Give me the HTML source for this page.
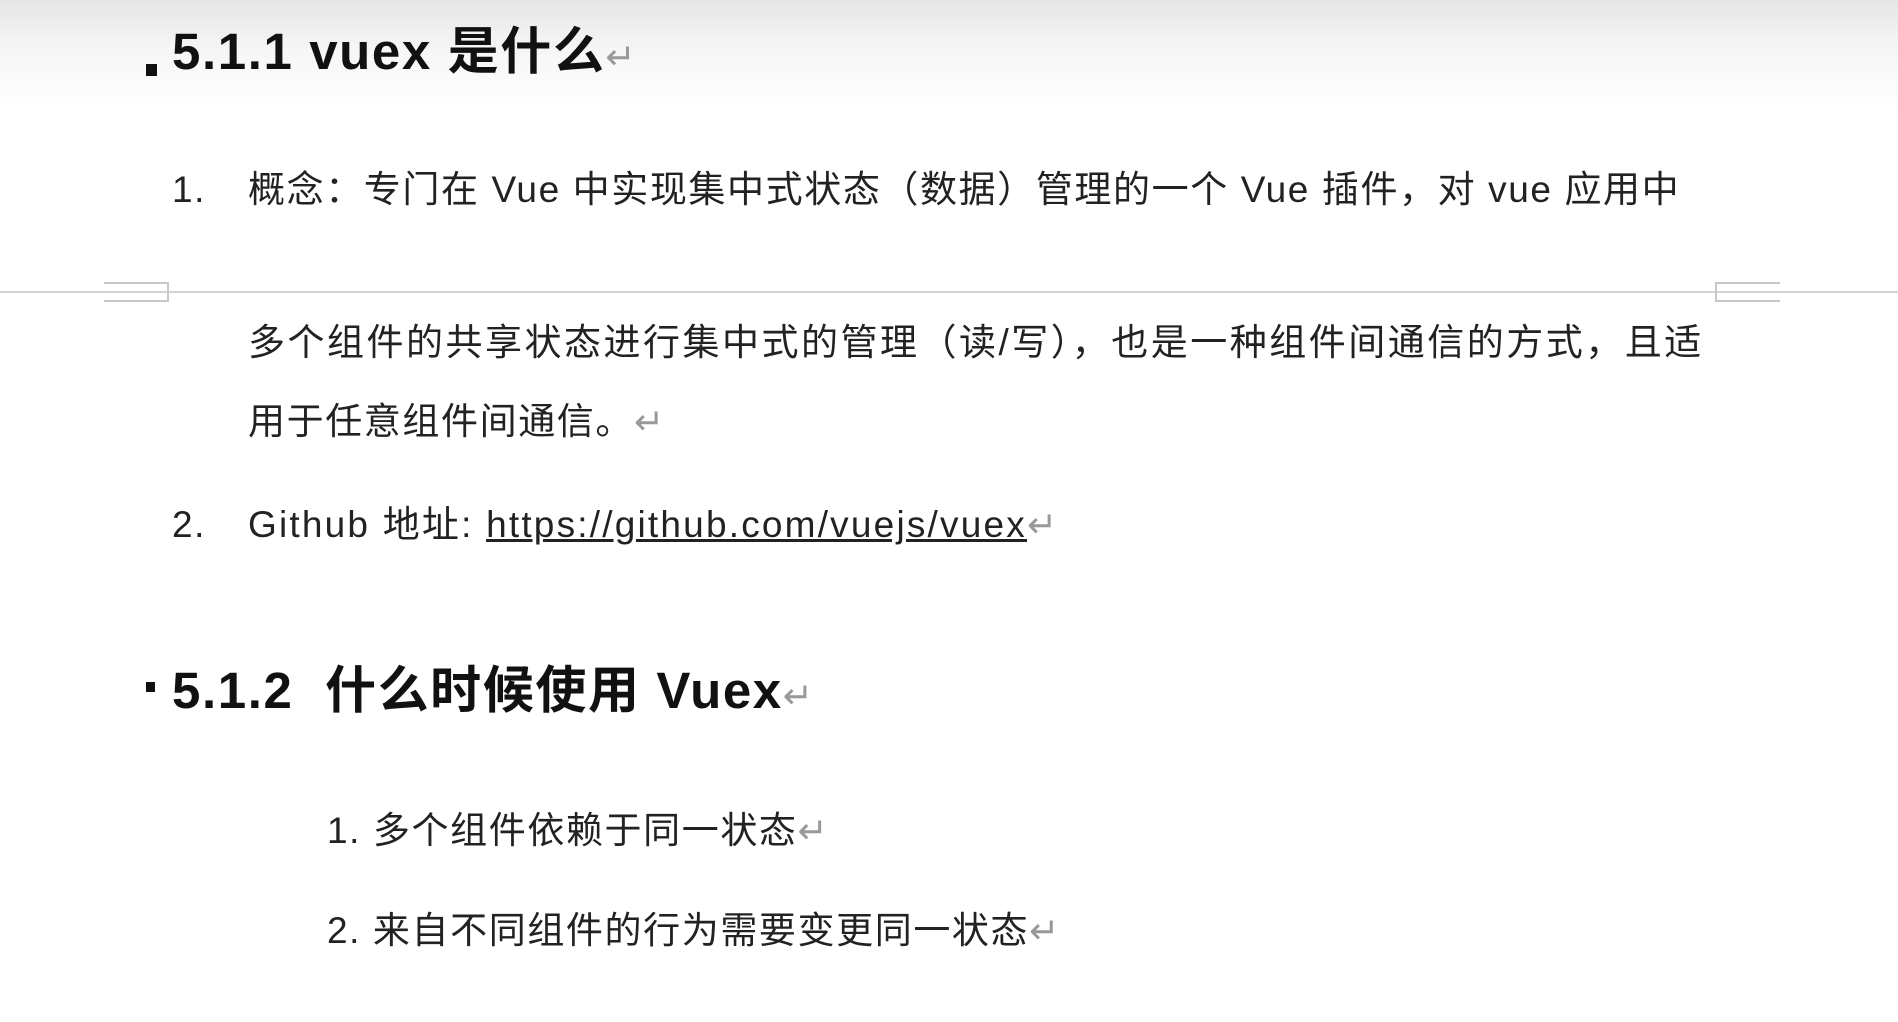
<!DOCTYPE html>
<html><head><meta charset="utf-8"><style>
html,body{margin:0;padding:0;width:1898px;height:1022px;overflow:hidden;background:#fff;}
body{background:linear-gradient(#e6e6e6 0px,#f6f6f6 50px,#fff 110px,#fff 100%);position:relative;
font-family:"Liberation Sans","Noto Sans CJK SC",sans-serif;color:#1a1a1a;}
.t{position:absolute;white-space:nowrap;line-height:1;}
.h{font-size:51px;font-weight:bold;color:#111;letter-spacing:1.6px;}
.b{font-size:37px;letter-spacing:1.6px;color:#222;}
.r{color:#999;font-weight:normal;font-size:36px;letter-spacing:0;}
.sq{position:absolute;background:#111;}
</style></head><body>
<div class="sq" style="left:146px;top:64px;width:11px;height:12px"></div>
<div class="t h" style="left:172px;top:26px">5.1.1 vuex 是什么<span class="r">↵</span></div>

<div class="t b" style="left:172px;top:171px">1.</div>
<div class="t b" style="left:248px;top:171px">概念：专门在 Vue 中实现集中式状态（数据）管理的一个 Vue 插件，对 vue 应用中</div>

<div style="position:absolute;left:0;top:291px;width:1898px;height:2px;background:#d4d4d4"></div>
<div style="position:absolute;left:104px;top:282px;width:63px;height:16px;border:2px solid #c8c8c8;border-left:none"></div>
<div style="position:absolute;left:1715px;top:282px;width:63px;height:16px;border:2px solid #c8c8c8;border-right:none"></div>

<div class="t b" style="left:248px;top:324px;letter-spacing:2.5px">多个组件的共享状态进行集中式的管理（读/写），也是一种组件间通信的方式，且适</div>
<div class="t b" style="left:248px;top:403px">用于任意组件间通信。<span class="r">↵</span></div>

<div class="t b" style="left:172px;top:506px">2.</div>
<div class="t b" style="left:248px;top:506px;letter-spacing:2.2px">Github 地址: <span style="text-decoration:underline">https://github.com/vuejs/vuex</span><span class="r">↵</span></div>

<div class="sq" style="left:146px;top:682px;width:9px;height:10px"></div>
<div class="t h" style="left:172px;top:665px">5.1.2&nbsp; 什么时候使用 Vuex<span class="r">↵</span></div>

<div class="t b" style="left:327px;top:812px">1. 多个组件依赖于同一状态<span class="r">↵</span></div>
<div class="t b" style="left:327px;top:912px">2. 来自不同组件的行为需要变更同一状态<span class="r">↵</span></div>
</body></html>
